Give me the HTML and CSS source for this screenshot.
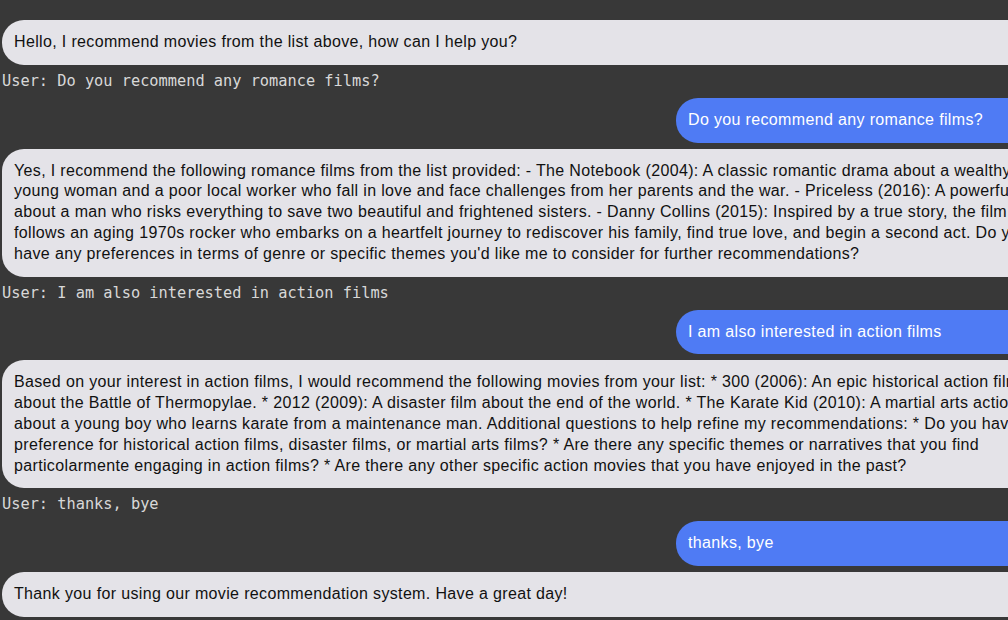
FILE: index.html
```html
<!DOCTYPE html>
<html lang="en">
<head>
<meta charset="utf-8">
<title>Movie recommendation chat</title>
<link rel="stylesheet" href="styles.css">
</head>
<body>
<div class="chat">
  <div class="bubble bot">Hello, I recommend movies from the list above, how can I help you?</div>
  <div class="log">User: Do you recommend any romance films?</div>
  <div class="bubble user">Do you recommend any romance films?</div>
  <div class="bubble bot">Yes, I recommend the following romance films from the list provided: - The Notebook (2004): A classic romantic drama about a wealthy young woman and a poor local worker who fall in love and face challenges from her parents and the war. - Priceless (2016): A powerful film about a man who risks everything to save two beautiful and frightened sisters. - Danny Collins (2015): Inspired by a true story, the film follows an aging 1970s rocker who embarks on a heartfelt journey to rediscover his family, find true love, and begin a second act. Do you have any preferences in terms of genre or specific themes you'd like me to consider for further recommendations?</div>
  <div class="log">User: I am also interested in action films</div>
  <div class="bubble user">I am also interested in action films</div>
  <div class="bubble bot">Based on your interest in action films, I would recommend the following movies from your list: * 300 (2006): An epic historical action film about the Battle of Thermopylae. * 2012 (2009): A disaster film about the end of the world. * The Karate Kid (2010): A martial arts action film about a young boy who learns karate from a maintenance man. Additional questions to help refine my recommendations: * Do you have a preference for historical action films, disaster films, or martial arts films? * Are there any specific themes or narratives that you find particolarmente engaging in action films? * Are there any other specific action movies that you have enjoyed in the past?</div>
  <div class="log">User: thanks, bye</div>
  <div class="bubble user">thanks, bye</div>
  <div class="bubble bot">Thank you for using our movie recommendation system. Have a great day!</div>
</div>
</body>
</html>
```
FILE: styles.css
```css
html {
  overflow: hidden;
  background: #383838;
}
body {
  margin: 0;
  padding: 20px 0 0 2px;
  background: #383838;
}
.chat {
  width: 1060px;
  display: flex;
  flex-direction: column;
  gap: 6px;
}
.bubble {
  font-family: "Liberation Sans", Arial, sans-serif;
  font-size: 16px;
  letter-spacing: 0.35px;
  line-height: 1.3;
  padding: 12px;
  border-radius: 22px;
}
.bot {
  background: #e4e3e8;
  color: #111111;
}
.user {
  background: #4f7bf4;
  color: #ffffff;
  margin-left: 674px;
}
.log {
  font-family: "DejaVu Sans Mono", "Liberation Mono", monospace;
  font-size: 15.3px;
  line-height: 21px;
  color: #d8d8d8;
  white-space: pre;
}
```
